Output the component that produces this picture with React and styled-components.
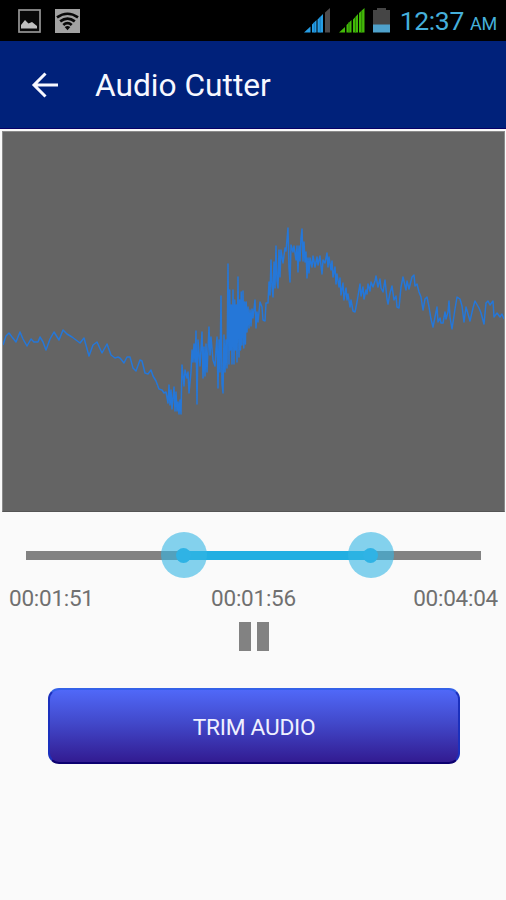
import React from 'react';
import styled, { createGlobalStyle } from 'styled-components'

const GlobalStyle = createGlobalStyle`
    * {
        box-sizing: border-box;
    }
    body {
        margin: 0;
        background: #fafafa;
        font-family: Roboto, "Noto Sans", sans-serif;
    }
`

const Screen = styled.div`
    display: flex;
    flex-direction: column;
    width: 506px;
    height: 900px;
    background: #fafafa;
    overflow: hidden;
`

const StatusBar = styled.div`
    display: flex;
    align-items: center;
    justify-content: space-between;
    height: 41px;
    padding: 0 9px 0 18px;
    background: #000;
`

const StatusGroup = styled.div`
    display: flex;
    align-items: center;
    gap: ${props => props.$gap};
`

const Clock = styled.div`
    display: flex;
    align-items: baseline;
    margin-left: 2px;
    padding-top: 2px;
    color: #45afdb;
    font-size: 26.5px;
    line-height: 39px;
    letter-spacing: -.35px;
    white-space: nowrap;

    span {
        margin-left: 6px;
        font-size: 18px;
        letter-spacing: -.2px;
    }
`

const Header = styled.header`
    display: flex;
    align-items: center;
    gap: 36px;
    height: 88px;
    padding-left: 31px;
    background: #00217a;
    border-bottom: 1px solid #080066;
`

const Title = styled.h1`
    margin: 0;
    padding-top: 2px;
    color: #f7f8ff;
    font-size: 31.7px;
    font-weight: 400;
    line-height: 40px;
    white-space: nowrap;
`

const WavePanel = styled.div`
    height: 381px;
    margin: 2px 1px 0 2px;
    background: #646464;
    border: 1px solid #8b8b8b;
    border-bottom-color: #555;

    svg {
        display: block;
    }
`

const RangeRow = styled.div`
    display: flex;
    align-items: center;
    height: 46px;
    margin: 20px 25px 0 26px;
`

const Track = styled.div`
    flex: ${props => props.$size} 0 0;
    height: 9px;
    background: ${props => props.$active ? '#22afe2' : '#828282'};
`

const Thumb = styled.div`
    position: relative;
    z-index: 1;
    display: flex;
    align-items: center;
    justify-content: center;
    width: 46px;
    height: 46px;
    margin: 0 -23px;
    border-radius: 50%;
    background: rgba(51, 181, 229, .6);

    &::after {
        content: "";
        width: 15px;
        height: 15px;
        border-radius: 50%;
        background: #2fb3e5;
    }
`

const Times = styled.div`
    display: flex;
    justify-content: space-between;
    height: 38px;
    padding: 0 8px 0 9px;
    color: #707070;
    font-size: 22.5px;
    letter-spacing: -.25px;
    line-height: 40px;
`

const PauseButton = styled.button`
    display: flex;
    gap: 6px;
    align-self: center;
    height: 29px;
    margin: 6px 0 0 1px;
    padding: 0;
    border: 0;
    background: none;

    span {
        width: 12px;
        height: 29px;
        background: #828282;
    }
`

const TrimButton = styled.button`
    align-self: center;
    width: 412px;
    height: 76px;
    margin: 37px 0 0 2px;
    padding: 2px 0 0;
    border: 2px solid;
    border-color: #3461e8 #1b30bd #0c0070 #1b30bd;
    border-radius: 11px;
    background: linear-gradient(#5068f8, #4249cb 45%, #321b91);
    color: #eff0ff;
    font-family: inherit;
    font-size: 22.7px;
    letter-spacing: -.25px;
`

const wave = [
    [3, 345], [6, 336], [9, 333], [12, 337], [16, 342], [20, 332], [23, 339], [27, 346], [31, 339], [34, 342],
    [38, 342], [40, 337], [43, 342], [46, 350], [50, 339], [54, 332], [59, 340], [63, 330], [67, 334], [72, 337],
    [80, 343], [84, 338], [89, 356], [93, 345], [97, 342], [102, 353], [107, 344], [111, 355], [115, 358],
    [118, 357], [120, 358], [124, 363], [127, 357], [130, 357], [133, 368], [136, 371], [140, 360], [142, 361],
    [145, 373], [148, 374], [151, 370], [153, 376], [156, 381], [159, 389], [162, 390], [164, 393], [166, 392],
    [168, 403], [169, 385], [170, 405], [171, 390], [172, 409], [173, 398], [174, 387], [175, 411], [176, 392],
    [177, 411], [178, 402], [179, 414], [180, 400], [181, 414], [182, 365], [184, 386], [185, 370], [187, 378],
    [188, 372], [189, 393], [191, 372], [192, 350], [193, 362], [194, 344], [195, 362], [196, 331], [197, 404],
    [198, 340], [200, 366], [202, 332], [203, 378], [204, 347], [205, 376], [206, 344], [207, 372], [209, 327],
    [210, 355], [211, 337], [213, 360], [215, 366], [216, 350], [217, 337], [218, 388], [219, 340], [220, 372],
    [221, 296], [222, 384], [223, 393], [224, 335], [225, 372], [226, 340], [227, 368], [228, 264], [229, 364],
    [229.7, 290], [230.5, 350], [231.3, 305], [232, 364], [233, 290], [234, 364], [234.8, 300], [235.5, 350],
    [236.3, 305], [237, 362], [238, 277], [239, 357], [239.7, 300], [240.5, 350], [241.2, 292], [242, 345],
    [243, 291], [243.8, 348], [244.6, 302], [245.4, 344], [246.2, 302], [247, 332], [248, 307], [249, 328],
    [250, 310], [251, 326], [252, 309], [253, 318], [255, 300], [256, 328], [257, 312], [258, 322], [260, 302],
    [262, 307], [263, 320], [265, 321], [266, 303], [268, 303], [269, 282], [270, 295], [271, 260], [272, 286],
    [273, 297], [274, 262], [275, 288], [276, 246], [277, 281], [278, 288], [279, 250], [280, 277], [281, 250],
    [283, 263], [285, 248], [286, 251], [288, 228], [289, 268], [290, 282], [291, 245], [293, 252], [294, 246],
    [296, 260], [297, 246], [298, 272], [299, 246], [300, 261], [301, 238], [302, 229], [303, 261], [304, 242],
    [305, 262], [306, 252], [307, 278], [308, 258], [309, 273], [310, 258], [312, 267], [313, 256], [315, 267],
    [317, 257], [318, 265], [320, 256], [321, 266], [322, 274], [323, 260], [325, 263], [327, 253], [328, 267],
    [329, 257], [331, 270], [332, 261], [333, 277], [335, 267], [336, 284], [337, 274], [339, 287], [340, 278],
    [341, 295], [343, 283], [344, 300], [346, 288], [347, 300], [348, 294], [350, 307], [351, 300], [353, 311],
    [355, 312], [357, 302], [360, 284], [361, 296], [363, 287], [364, 299], [366, 290], [367, 294], [368, 284],
    [370, 291], [371, 282], [373, 287], [375, 281], [376, 276], [378, 287], [380, 279], [381, 288], [383, 292],
    [385, 280], [387, 299], [388, 304], [390, 293], [392, 286], [394, 300], [396, 296], [397, 307], [399, 308],
    [401, 287], [403, 277], [406, 290], [407, 281], [409, 289], [412, 277], [414, 275], [415, 286], [417, 284],
    [419, 292], [421, 297], [423, 310], [425, 299], [427, 297], [429, 307], [431, 319], [433, 327], [435, 317],
    [437, 307], [438, 322], [440, 318], [441, 323], [443, 323], [445, 312], [446, 319], [448, 312], [449, 301],
    [450, 317], [452, 329], [455, 309], [457, 297], [460, 299], [462, 306], [464, 322], [466, 307], [470, 321],
    [473, 308], [475, 301], [479, 308], [481, 313], [484, 324], [486, 303], [488, 301], [490, 305], [493, 301],
    [494, 317], [497, 313], [500, 317], [502, 314], [504, 319]
]

function WaveForm() {
    const points = wave.map(point => point.join(',')).join(' ')

    return (
        <WavePanel>
            <svg width='501' height='379' viewBox='3 132 501 379'>
                <polyline points={points} fill='none' stroke='#2577d8' strokeWidth='1.5' strokeLinejoin='round' />
            </svg>
        </WavePanel>
    )
}

function GalleryIcon() {
    return (
        <svg width='23' height='24' viewBox='0 0 23 24'>
            <rect x='1' y='1' width='21' height='22' fill='#090909' stroke='#969696' strokeWidth='1.7' />
            <path d='M3 19.5V16L7 11L10.5 14.5L14 13L19 17V19.5Z' fill='#c0c0c0' />
        </svg>
    )
}

function WifiIcon() {
    return (
        <svg width='25' height='24' viewBox='0 0 25 24'>
            <rect width='25' height='24' fill='#a2a2a2' />
            <g fill='none' stroke='#080808' strokeWidth='2.7'>
                <path d='M2 8.3Q12.5 1.2 23 8.3' />
                <path d='M5.2 12.4Q12.5 6.7 19.8 12.4' />
                <path d='M8.3 16Q12.5 12.2 16.7 16' />
            </g>
            <path d='M9.7 18Q12.5 15.8 15.3 18L12.5 21.2Z' fill='#080808' />
        </svg>
    )
}

function SimSignal() {
    return (
        <svg width='27' height='25' viewBox='0 0 27 25'>
            <path d='M0 24.5L6.5 18.5V24.5ZM8 24.5V16.5L12.5 12V24.5ZM13.5 24.5V11.5L19 6V24.5Z' fill='#279de4' />
            <path d='M10.3 14V24.5M16.2 9V24.5' stroke='#1278ba' strokeWidth='.9' />
            <path d='M21 24.5V4.5L26 0V24.5Z' fill='#4d4b4d' />
        </svg>
    )
}

function NetworkSignal() {
    return (
        <svg width='26' height='25' viewBox='0 0 26 25'>
            <path d='M0 24.5L6 19V24.5ZM7.5 24.5V17L12.5 12V24.5ZM14 24.5V11.5L19 6V24.5ZM20 24.5V5L25.5 0V24.5Z' fill='#43b908' />
            <path d='M10 14V24.5M16.5 9V24.5M22.7 3V24.5' stroke='#298004' strokeWidth='1' />
        </svg>
    )
}

function BatteryIcon() {
    return (
        <svg width='17' height='25' viewBox='0 0 17 25'>
            <path d='M0 2H4V0H13V2H17V17H0Z' fill='#454545' />
            <path d='M0 16.5H17V24.5H0Z' fill='#4fa2cc' />
        </svg>
    )
}

function BackIcon() {
    return (
        <svg width='28' height='26' viewBox='0 0 28 26'>
            <path d='M27 13H3M14.5 1.5L3 13L14.5 24.5' fill='none' stroke='#f7f8ff' strokeWidth='3' />
        </svg>
    )
}

function App() {
    return (
        <Screen>
            <GlobalStyle />
            <StatusBar>
                <StatusGroup $gap='14px'>
                    <GalleryIcon />
                    <WifiIcon />
                </StatusGroup>
                <StatusGroup $gap='8px'>
                    <SimSignal />
                    <NetworkSignal />
                    <BatteryIcon />
                    <Clock>12:37<span>AM</span></Clock>
                </StatusGroup>
            </StatusBar>
            <Header>
                <BackIcon />
                <Title>Audio Cutter</Title>
            </Header>
            <WaveForm />
            <RangeRow>
                <Track $size={157.5} />
                <Thumb />
                <Track $size={187} $active />
                <Thumb />
                <Track $size={110.5} />
            </RangeRow>
            <Times>
                <span>00:01:51</span>
                <span>00:01:56</span>
                <span>00:04:04</span>
            </Times>
            <PauseButton aria-label='Pause'>
                <span />
                <span />
            </PauseButton>
            <TrimButton>TRIM AUDIO</TrimButton>
        </Screen>
    )
}

export default App
